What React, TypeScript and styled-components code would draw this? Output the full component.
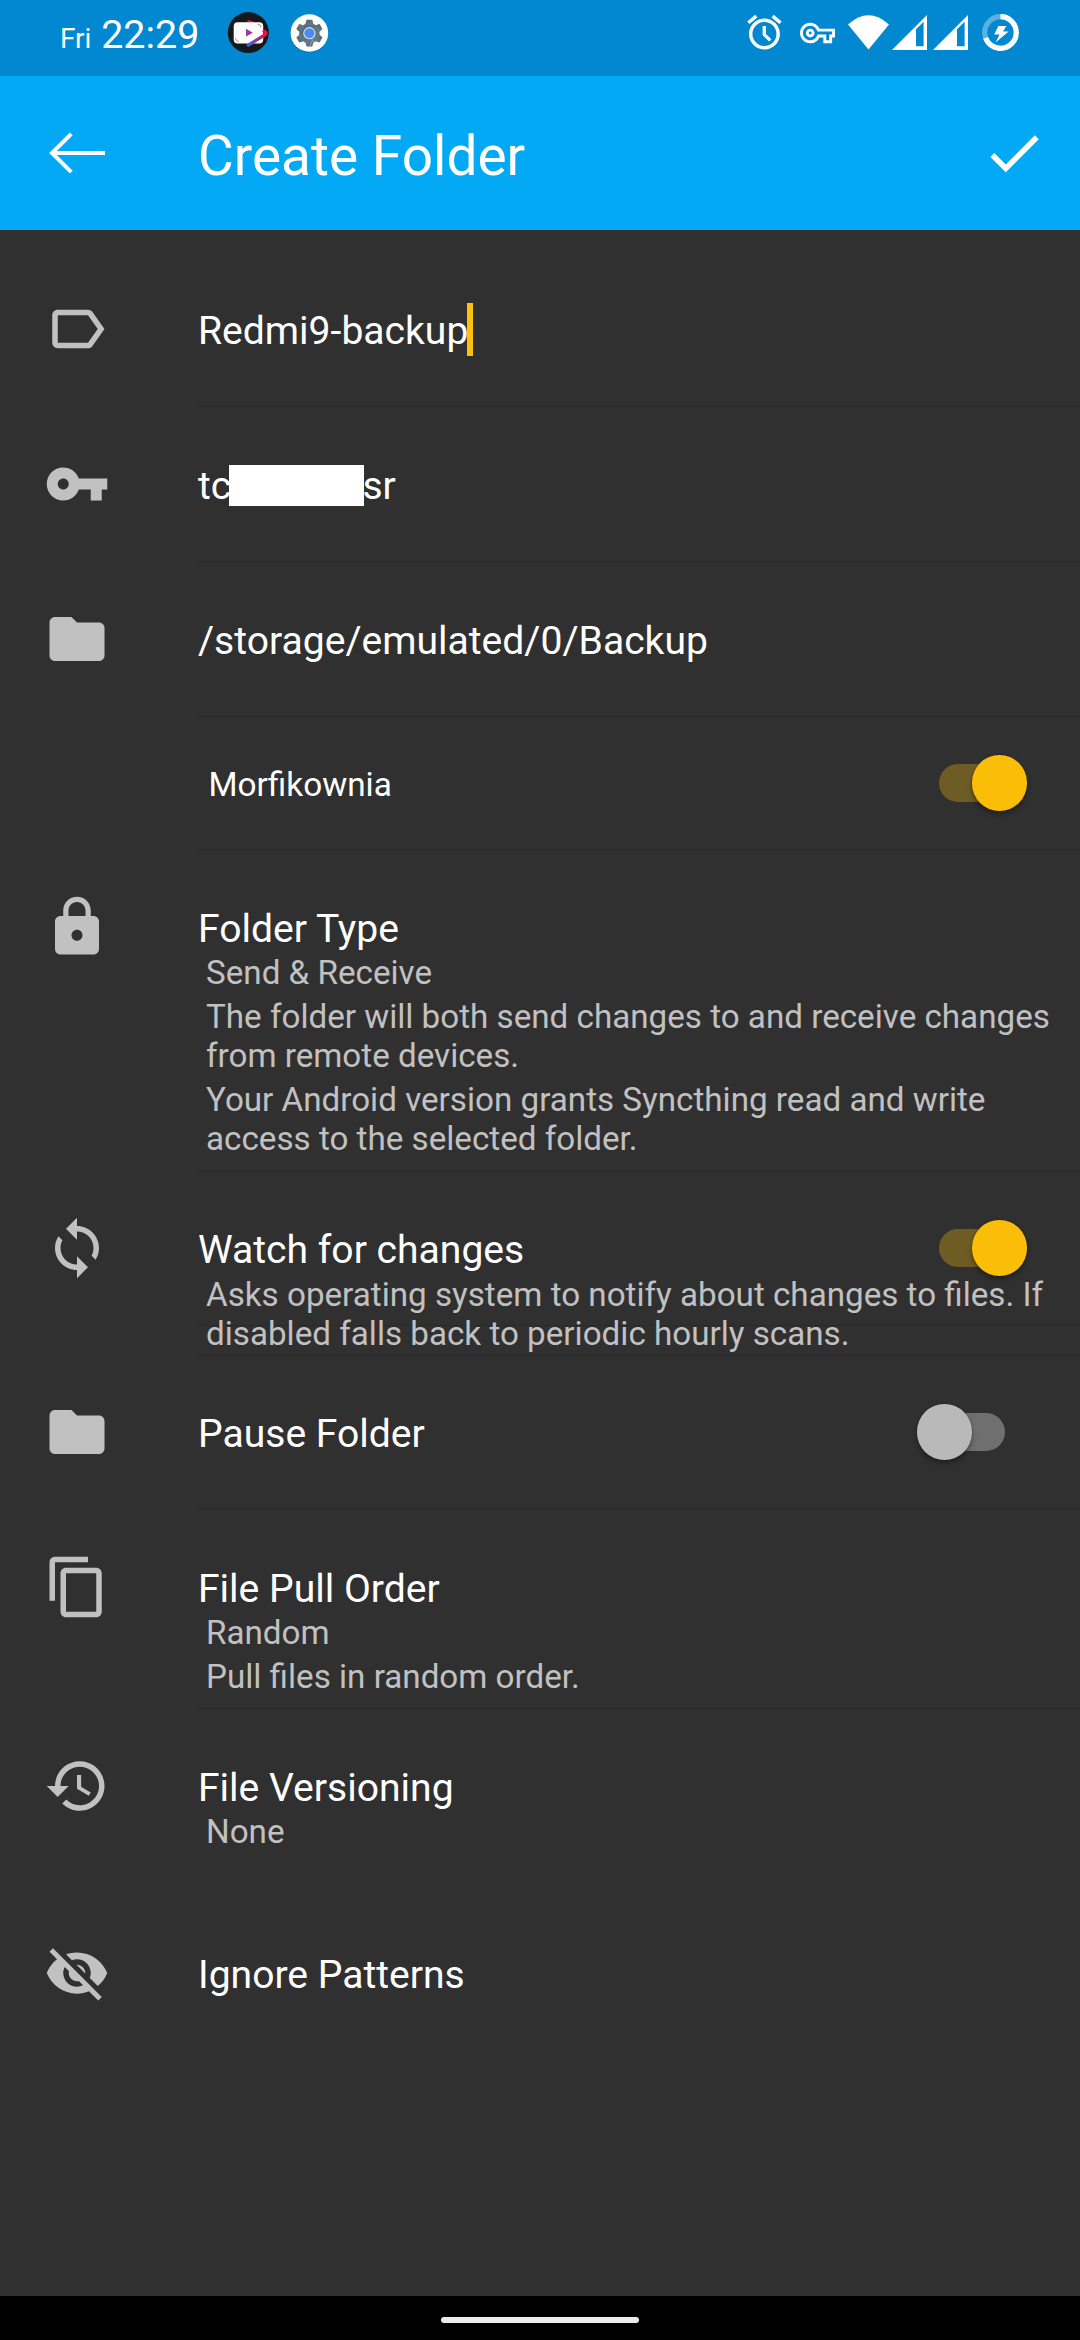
import React from 'react';
import styled, { createGlobalStyle } from 'styled-components';

const GlobalStyle = createGlobalStyle`
  html, body {
    margin: 0;
    background: #303030;
  }
  * { box-sizing: border-box; }
`;

const Screen = styled.div`
  display: flex;
  flex-direction: column;
  width: 1080px;
  height: 2340px;
  background: #303030;
  color: #fff;
  font-family: Roboto, 'Noto Sans', sans-serif;
  overflow: hidden;
`;

const StatusBar = styled.header`
  display: flex;
  flex: none;
  justify-content: space-between;
  height: 76px;
  padding: 0 60px;
  background: #0288d1;
`;

const StatusLeft = styled.div`
  display: flex;
`;

const Clock = styled.div`
  width: 167px;
  font-size: 39.4px;
  line-height: 69px;
  white-space: pre;
`;

const Day = styled.span`
  font-size: 28px;
`;

const AppBar = styled.div`
  display: flex;
  flex: none;
  align-items: center;
  height: 154px;
  padding: 0 33px 0 44px;
  background: #03a9f4;
`;

const BackIcon = styled.svg`
  flex: none;
  width: 66px;
  height: 66px;
  margin-right: 88px;
`;

const Heading = styled.h1`
  flex: 1;
  margin: 0;
  padding-top: 5px;
  font-size: 55px;
  font-weight: 400;
  line-height: 64px;
`;

const CheckIcon = styled.svg`
  flex: none;
  width: 66px;
  height: 66px;
`;

const Form = styled.main`
  display: flex;
  flex: 1;
  flex-direction: column;
  padding-top: 22px;
`;

const Item = styled.section<{ $height: number }>`
  display: flex;
  flex: none;
  height: ${(p) => p.$height}px;
`;

const Leading = styled.div`
  display: flex;
  flex: none;
  align-items: center;
  width: 198px;
  height: 154px;
  padding-left: 44px;
`;

const LeadingIcon = styled.svg`
  width: 66px;
  height: 66px;
  fill: #c1c1c1;
`;

const Content = styled.div<{ $divider: boolean }>`
  flex: 1;
  min-width: 0;
  border-bottom: ${(p) => (p.$divider ? '1px solid #2a2a2a' : 'none')};
`;

const HeaderRow = styled.div<{ $short?: boolean; $divider?: boolean }>`
  display: flex;
  align-items: center;
  justify-content: space-between;
  height: ${(p) => (p.$divider ? 155 : p.$short ? 132 : 154)}px;
  border-bottom: ${(p) => (p.$divider ? '1px solid #2a2a2a' : 'none')};
`;

const Title = styled.div`
  display: flex;
  align-items: center;
  padding-top: 3px;
  font-size: 39.1px;
  line-height: 46px;
  white-space: nowrap;
`;

const DeviceName = styled.div`
  padding: 2px 0 0 10.5px;
  font-size: 33.3px;
  line-height: 39px;
`;

const Details = styled.div`
  display: flex;
  flex-direction: column;
  gap: 5px;
  margin-top: -51px;
  padding: 0 22px 0 8px;
  color: #c1c1c1;
  font-size: 33.2px;
  line-height: 39px;
`;

const Caret = styled.span`
  width: 6px;
  height: 53px;
  margin: -5px 0 -2px -1px;
  background: #fcc010;
`;

const Redaction = styled.span`
  width: 135px;
  height: 41px;
  margin: 0 -1.5px 0 -2.3px;
  background: #fff;
`;

const Track = styled.div<{ $on: boolean }>`
  display: flex;
  align-items: center;
  justify-content: ${(p) => (p.$on ? 'flex-end' : 'flex-start')};
  width: 88px;
  height: 38px;
  margin-right: ${(p) => (p.$on ? 53 : 75)}px;
  border-radius: 19px;
  background: ${(p) => (p.$on ? '#6f5c25' : '#6f6f6f')};
`;

const Thumb = styled.div<{ $on: boolean }>`
  flex: none;
  width: 55.4px;
  height: 55.4px;
  border-radius: 50%;
  background: ${(p) => (p.$on ? '#fabd08' : '#b9b9b9')};
  box-shadow: 0 3px 5px rgba(0, 0, 0, 0.35), 0 0 2px rgba(0, 0, 0, 0.2);
`;

const NavBar = styled.footer`
  display: flex;
  flex: none;
  align-items: center;
  justify-content: center;
  height: 44px;
  background: #000;
`;

const Handle = styled.div`
  width: 198px;
  height: 6px;
  margin-top: 4px;
  border-radius: 3px;
  background: #ececec;
`;

const icons = {
  label: 'M17.63 5.84C17.27 5.33 16.67 5 16 5L5 5.01C3.9 5.01 3 5.9 3 7v10c0 1.1.9 1.99 2 1.99L16 19c.67 0 1.27-.33 1.63-.84L22 12l-4.37-6.16zM16 17H5V7h11l3.55 5L16 17z',
  key: 'M12.65 10C11.83 7.67 9.61 6 7 6c-3.31 0-6 2.69-6 6s2.69 6 6 6c2.61 0 4.83-1.67 5.65-4H17v4h4v-4h2v-4H12.65zM7 14c-1.1 0-2-.9-2-2s.9-2 2-2 2 .9 2 2-.9 2-2 2z',
  folder: 'M10 4H4c-1.1 0-1.99.9-1.99 2L2 18c0 1.1.9 2 2 2h16c1.1 0 2-.9 2-2V8c0-1.1-.9-2-2-2h-8l-2-2z',
  lock: 'M18 8h-1V6c0-2.76-2.24-5-5-5S7 3.24 7 6v2H6c-1.1 0-2 .9-2 2v10c0 1.1.9 2 2 2h12c1.1 0 2-.9 2-2V10c0-1.1-.9-2-2-2zm-6 9c-1.1 0-2-.9-2-2s.9-2 2-2 2 .9 2 2-.9 2-2 2zm3.1-9H8.9V6c0-1.71 1.39-3.1 3.1-3.1 1.71 0 3.1 1.39 3.1 3.1v2z',
  sync: 'M12 4V1L8 5l4 4V6c3.31 0 6 2.69 6 6 0 1.01-.25 1.97-.7 2.8l1.46 1.46C19.54 15.03 20 13.57 20 12c0-4.42-3.58-8-8-8zm0 14c-3.31 0-6-2.69-6-6 0-1.01.25-1.97.7-2.8L5.24 7.74C4.46 8.97 4 10.43 4 12c0 4.42 3.58 8 8 8v3l4-4-4-4v3z',
  copy: 'M16 1H4c-1.1 0-2 .9-2 2v14h2V3h12V1zm3 4H8c-1.1 0-2 .9-2 2v14c0 1.1.9 2 2 2h11c1.1 0 2-.9 2-2V7c0-1.1-.9-2-2-2zm0 16H8V7h11v14z',
  history: 'M13 3c-4.97 0-9 4.03-9 9H1l3.89 3.89.07.14L9 12H6c0-3.87 3.13-7 7-7s7 3.13 7 7-3.13 7-7 7c-1.93 0-3.68-.79-4.94-2.06l-1.42 1.42C8.27 19.99 10.51 21 13 21c4.97 0 9-4.03 9-9s-4.03-9-9-9zm-1 5v5l4.28 2.54.72-1.21-3.5-2.08V8H12z',
  hidden: 'M12 7c2.76 0 5 2.24 5 5 0 .65-.13 1.26-.36 1.83l2.92 2.92c1.51-1.26 2.7-2.89 3.43-4.75-1.73-4.39-6-7.5-11-7.5-1.4 0-2.74.25-3.98.7l2.16 2.16C10.74 7.13 11.35 7 12 7zM2 4.27l2.28 2.28.46.46C3.08 8.3 1.78 10.02 1 12c1.73 4.39 6 7.5 11 7.5 1.55 0 3.03-.3 4.38-.84l.42.42L19.73 22 21 20.73 3.27 3 2 4.27zM7.53 9.8l1.55 1.55c-.05.21-.08.43-.08.65 0 1.66 1.34 3 3 3 .22 0 .44-.03.65-.08l1.55 1.55c-.67.33-1.41.53-2.2.53-2.76 0-5-2.24-5-5 0-.79.2-1.53.53-2.2zm4.31-.78l3.15 3.15.02-.16c0-1.66-1.34-3-3-3l-.17.01z',
};

type IconName = keyof typeof icons;

function Switch({ on }: { on: boolean }) {
  return (
    <Track $on={on} role="switch" aria-checked={on}>
      <Thumb $on={on} />
    </Track>
  );
}

interface SettingProps {
  height: number;
  icon?: IconName;
  title: React.ReactNode;
  details?: string[];
  on?: boolean;
  divider?: boolean;
  headerDivider?: boolean;
}

function Setting({ height, icon, title, details, on, divider = true, headerDivider }: SettingProps) {
  return (
    <Item $height={height}>
      <Leading>
        {icon && (
          <LeadingIcon viewBox="0 0 24 24">
            <path d={icons[icon]} />
          </LeadingIcon>
        )}
      </Leading>
      <Content $divider={divider}>
        <HeaderRow $short={!icon} $divider={headerDivider}>
          {icon ? <Title>{title}</Title> : <DeviceName>{title}</DeviceName>}
          {on !== undefined && <Switch on={on} />}
        </HeaderRow>
        {details && (
          <Details>
            {details.map((line) => (
              <div key={line}>{line}</div>
            ))}
          </Details>
        )}
      </Content>
    </Item>
  );
}

function NotificationIcons() {
  const teeth = [0, 60, 120, 180, 240, 300];
  return (
    <svg width="110" height="76" viewBox="227 0 110 76">
      <defs>
        <linearGradient id="swoosh" x1="0" y1="1" x2="1" y2="0">
          <stop offset="0" stopColor="#3f62d8" />
          <stop offset="0.5" stopColor="#8c3a9c" />
          <stop offset="0.8" stopColor="#f0104c" />
        </linearGradient>
        <linearGradient id="play" x1="0" y1="0" x2="1" y2="0">
          <stop offset="0" stopColor="#7a48b4" />
          <stop offset="1" stopColor="#ee1c50" />
        </linearGradient>
        <linearGradient id="gear" x1="0" y1="0" x2="1" y2="1">
          <stop offset="0" stopColor="#4d626c" />
          <stop offset="1" stopColor="#6c838d" />
        </linearGradient>
      </defs>
      <circle cx="248.3" cy="32.6" r="20.5" fill="#17181c" />
      <path d="M247.5 21.2L253 23" stroke="#e0124c" strokeWidth="3" />
      <rect x="233.7" y="22.2" width="29.5" height="21.3" rx="4" fill="#fff" />
      <path d="M257.5 24.2q3.4 0 3.6 3M235.3 38q.2 3.2 3.4 3.5" stroke="#d0708c" strokeWidth="0.9" fill="none" />
      <path d="M264 31.2q3.8 1.3 0 4.3L248.3 45.2" stroke="url(#swoosh)" strokeWidth="3.3" fill="none" strokeLinecap="round" />
      <path d="M246 28.8v7.8l6.8-3.9z" fill="url(#play)" />

      <circle cx="309.4" cy="34" r="18.8" fill="#0b4f78" opacity="0.4" />
      <circle cx="309.4" cy="33" r="18.8" fill="#fff" />
      <g fill="url(#gear)">
        <circle cx="309.4" cy="33.2" r="10.2" />
        {teeth.map((a) => (
          <path key={a} d="M305.2 25l1.3-5.2h5.8l1.3 5.2z" transform={`rotate(${a} 309.4 33.2)`} />
        ))}
      </g>
      <path d="M309.4 33.2l4.2 7.4-3.4 5.9h-1.5l3-6z" fill="#84979f" />
      <circle cx="309.4" cy="33.2" r="6.1" fill="#d6e2ee" />
      <circle cx="309.4" cy="33.2" r="5" fill="#4a8af4" />
    </svg>
  );
}

function SystemIcons() {
  return (
    <svg width="280" height="76" viewBox="740 0 280 76" fill="#fff">
      <g transform="translate(743.8 11.6) scale(1.72)">
        <path d="M22 5.72l-4.6-3.86-1.29 1.53 4.6 3.86L22 5.72zM7.88 3.39L6.6 1.86 2 5.71l1.29 1.53 4.59-3.85zM12 4c-4.97 0-9 4.03-9 9s4.02 9 9 9c4.97 0 9-4.03 9-9s-4.03-9-9-9zm0 16c-3.87 0-7-3.13-7-7s3.13-7 7-7 7 3.13 7 7-3.13 7-7 7z" />
        <path d="M11.9 8.3v5.1l3.5 3.3" fill="none" stroke="#fff" strokeWidth="1.9" />
      </g>
      <path
        transform="translate(800 15.5) scale(1.46)"
        d="M22 19h-6v-4h-2.68c-1.14 2.42-3.6 4-6.32 4-3.86 0-7-3.14-7-7s3.14-7 7-7c2.72 0 5.17 1.58 6.32 4H24v6h-2v4zm-4-2h2v-4h2v-2H11.94l-.23-.67C11.01 8.34 9.11 7 7 7c-2.76 0-5 2.24-5 5s2.24 5 5 5c2.11 0 4.01-1.34 4.71-3.33l.23-.67H18v4zM7 15c-1.65 0-3-1.35-3-3s1.35-3 3-3 3 1.35 3 3-1.35 3-3 3zm0-4c-.55 0-1 .45-1 1s.45 1 1 1 1-.45 1-1-.45-1-1-1z"
      />
      <path d="M848 24.5Q868.5 6 889 24.5L868.5 49.5z" />
      {[0, 41].map((dx) => (
        <path key={dx} transform={`translate(${dx} 0)`} fillRule="evenodd" d="M892 50L927 15V50zM916 29.2V46.2H923.6V21.8z" />
      ))}
      <g fill="none" strokeWidth="5.2" transform="rotate(-90 1000.5 32.5)">
        <circle cx="1000.5" cy="32.5" r="15.8" stroke="#fff" strokeOpacity="0.35" />
        <circle cx="1000.5" cy="32.5" r="15.8" stroke="#fff" pathLength="100" strokeDasharray="69.5 100" />
      </g>
      <path d="M998.4 26H1006.4L1003 31.4H1008.6L995.6 42.6L999.6 34.6H994.2z" />
    </svg>
  );
}

export default function App() {
  return (
    <Screen>
      <GlobalStyle />
      <StatusBar>
        <StatusLeft>
          <Clock>
            <Day>Fri</Day> 22:29
          </Clock>
          <NotificationIcons />
        </StatusLeft>
        <SystemIcons />
      </StatusBar>
      <AppBar>
        <BackIcon viewBox="44 120 66 66" fill="none" stroke="#fff" strokeWidth="4">
          <path d="M105 153H52M71.3 133.8L52 153L71.3 172.2" />
        </BackIcon>
        <Heading>Create Folder</Heading>
        <CheckIcon viewBox="0 0 24 24" fill="#fff">
          <path d="M9 16.17L4.83 12l-1.42 1.41L9 19 21 7l-1.41-1.41z" />
        </CheckIcon>
      </AppBar>
      <Form>
        <Setting height={155} icon="label" title={<>Redmi9-backup<Caret /></>} />
        <Setting height={155} icon="key" title={<>tc<Redaction />sr</>} />
        <Setting height={155} icon="folder" title="/storage/emulated/0/Backup" />
        <Setting height={133} title="Morfikownia" on />
        <Setting
          height={321}
          icon="lock"
          title="Folder Type"
          details={[
            'Send & Receive',
            'The folder will both send changes to and receive changes from remote devices.',
            'Your Android version grants Syncthing read and write access to the selected folder.',
          ]}
        />
        <Setting
          height={184}
          icon="sync"
          title="Watch for changes"
          on
          headerDivider
          details={['Asks operating system to notify about changes to files. If disabled falls back to periodic hourly scans.']}
        />
        <Setting height={155} icon="folder" title="Pause Folder" on={false} />
        <Setting height={199} icon="copy" title="File Pull Order" details={['Random', 'Pull files in random order.']} />
        <Setting height={187} icon="history" title="File Versioning" details={['None']} divider={false} />
        <Setting height={154} icon="hidden" title="Ignore Patterns" divider={false} />
      </Form>
      <NavBar>
        <Handle />
      </NavBar>
    </Screen>
  );
}
